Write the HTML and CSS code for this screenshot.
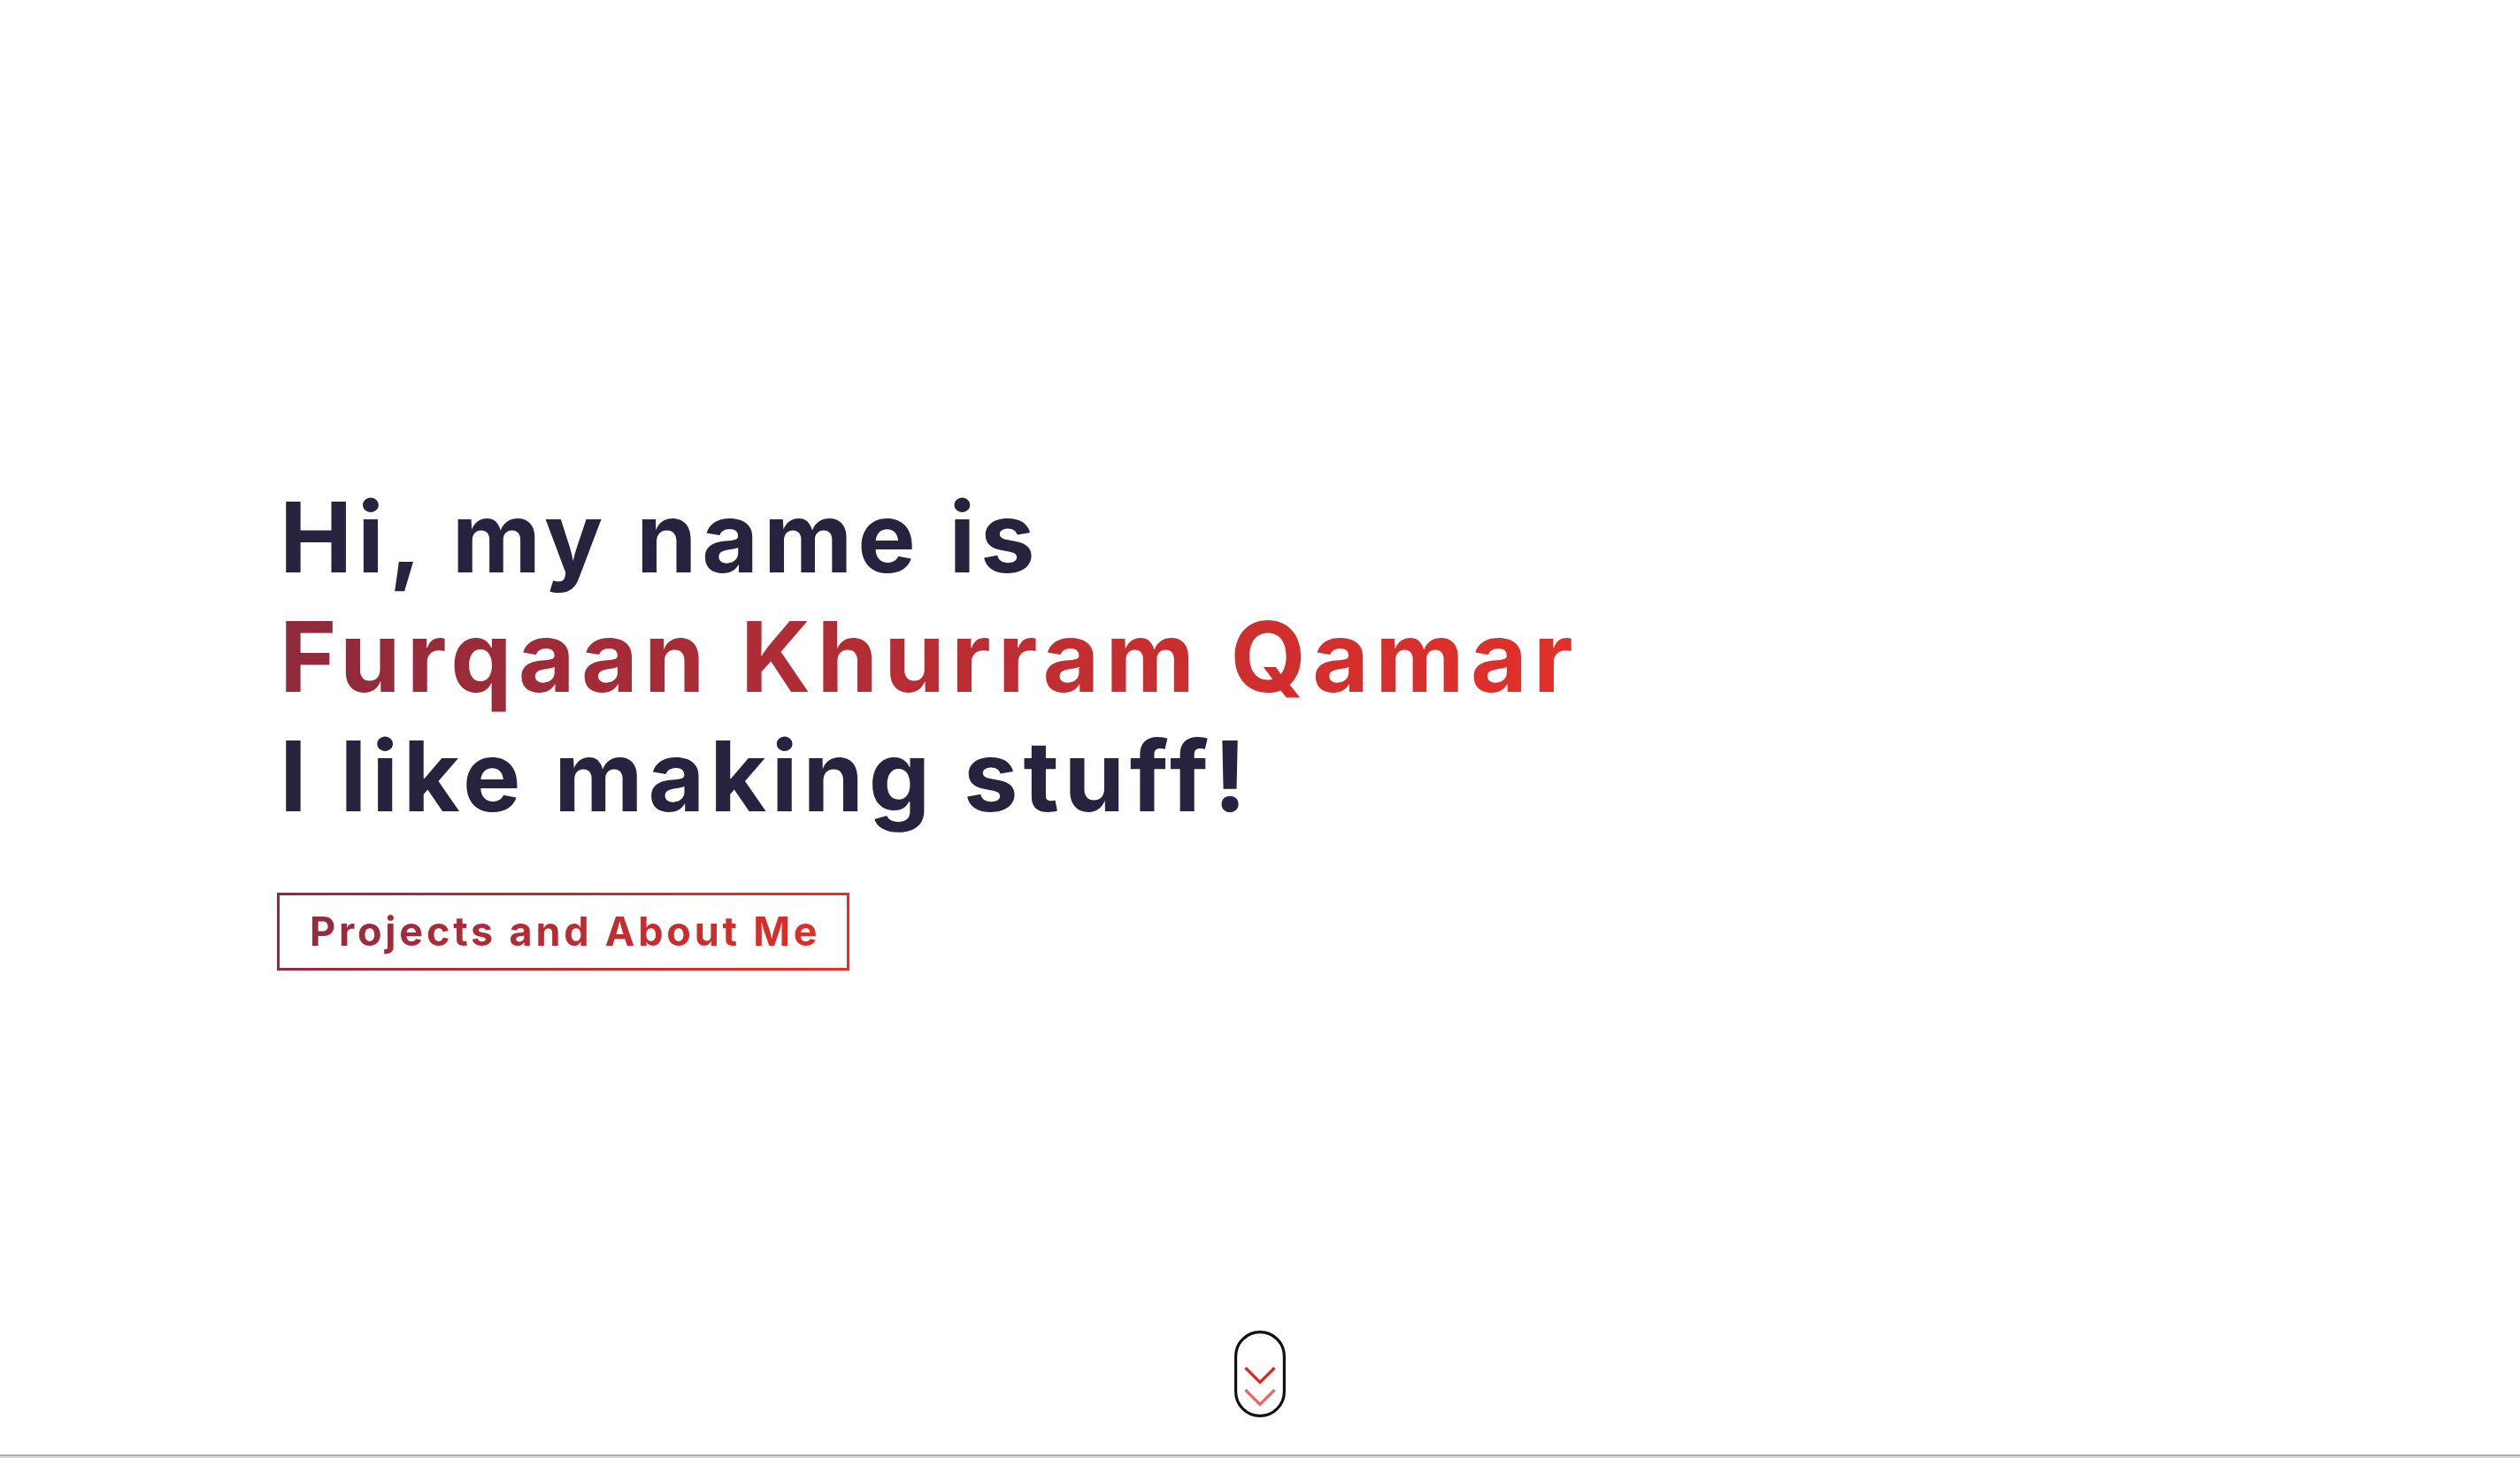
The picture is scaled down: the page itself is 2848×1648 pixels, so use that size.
FILE: index.html
```html
<!DOCTYPE html>
<html lang="en">
<head>
<meta charset="utf-8">
<title>Furqaan Khurram Qamar</title>
<link rel="stylesheet" href="styles.css">
</head>
<body>
<main class="hero">
  <section class="intro">
    <h1 class="headline">
      <span class="line">Hi, my name is</span>
      <span class="line"><span class="name">Furqaan Khurram Qamar</span></span>
      <span class="line">I like making stuff!</span>
    </h1>
    <a class="cta" href="#about"><span class="cta-text">Projects and About Me</span></a>
  </section>
  <div class="scroll-hint" aria-label="Scroll down">
    <svg width="58" height="98" viewBox="0 0 58 98" fill="none">
      <rect x="1.6" y="1.6" width="54.8" height="94.8" rx="27.4" stroke="#111" stroke-width="3.2"/>
      <polyline points="12.5,42 29,58.5 45.5,42" stroke="#e4261f" stroke-width="3.2" stroke-linecap="butt"/>
      <polyline points="12.5,67 29,83.5 45.5,67" stroke="#f0665e" stroke-width="3.2" stroke-linecap="butt"/>
    </svg>
  </div>
</main>
<div class="page-edge"></div>
</body>
</html>
```
FILE: styles.css
```css
html, body {
  margin: 0;
  padding: 0;
  background: #ffffff;
}

body {
  font-family: Inter, "Open Sans", "Liberation Sans", sans-serif;
  color: #26233f;
  overflow: hidden;
}

.hero {
  height: 1644px;
  display: flex;
  flex-direction: column;
}

.intro {
  padding-top: 540px;
  padding-left: 313px;
  display: flex;
  flex-direction: column;
  align-items: flex-start;
}

.headline {
  margin: 0 0 0 3px;
  font-size: 110px;
  font-weight: 700;
  line-height: 135px;
  letter-spacing: 0.053em;
  display: flex;
  flex-direction: column;
}

.line {
  display: block;
  white-space: nowrap;
}

.name {
  display: inline-block;
  letter-spacing: 0.066em;
  background: linear-gradient(to right, #8e2a3c, #e3302a);
  -webkit-background-clip: text;
  background-clip: text;
  color: transparent;
}

.cta {
  margin-top: 64px;
  display: inline-block;
  border: 3px solid;
  border-image: linear-gradient(to right, #922b3e, #e4302a) 1;
  padding: 14px 30px 14px 34px;
  text-decoration: none;
  font-size: 45px;
  font-weight: 700;
  line-height: 54px;
  letter-spacing: 0.084em;
}

.cta-text {
  display: inline-block;
  white-space: nowrap;
  background: linear-gradient(to right, #932b3e, #dd2e2a);
  -webkit-background-clip: text;
  background-clip: text;
  color: transparent;
}

.scroll-hint {
  margin-top: auto;
  margin-bottom: 42px;
  align-self: center;
  line-height: 0;
}

.page-edge {
  height: 2px;
  border-top: 2px solid #acacac;
  background: #d8d8d8;
}
```
